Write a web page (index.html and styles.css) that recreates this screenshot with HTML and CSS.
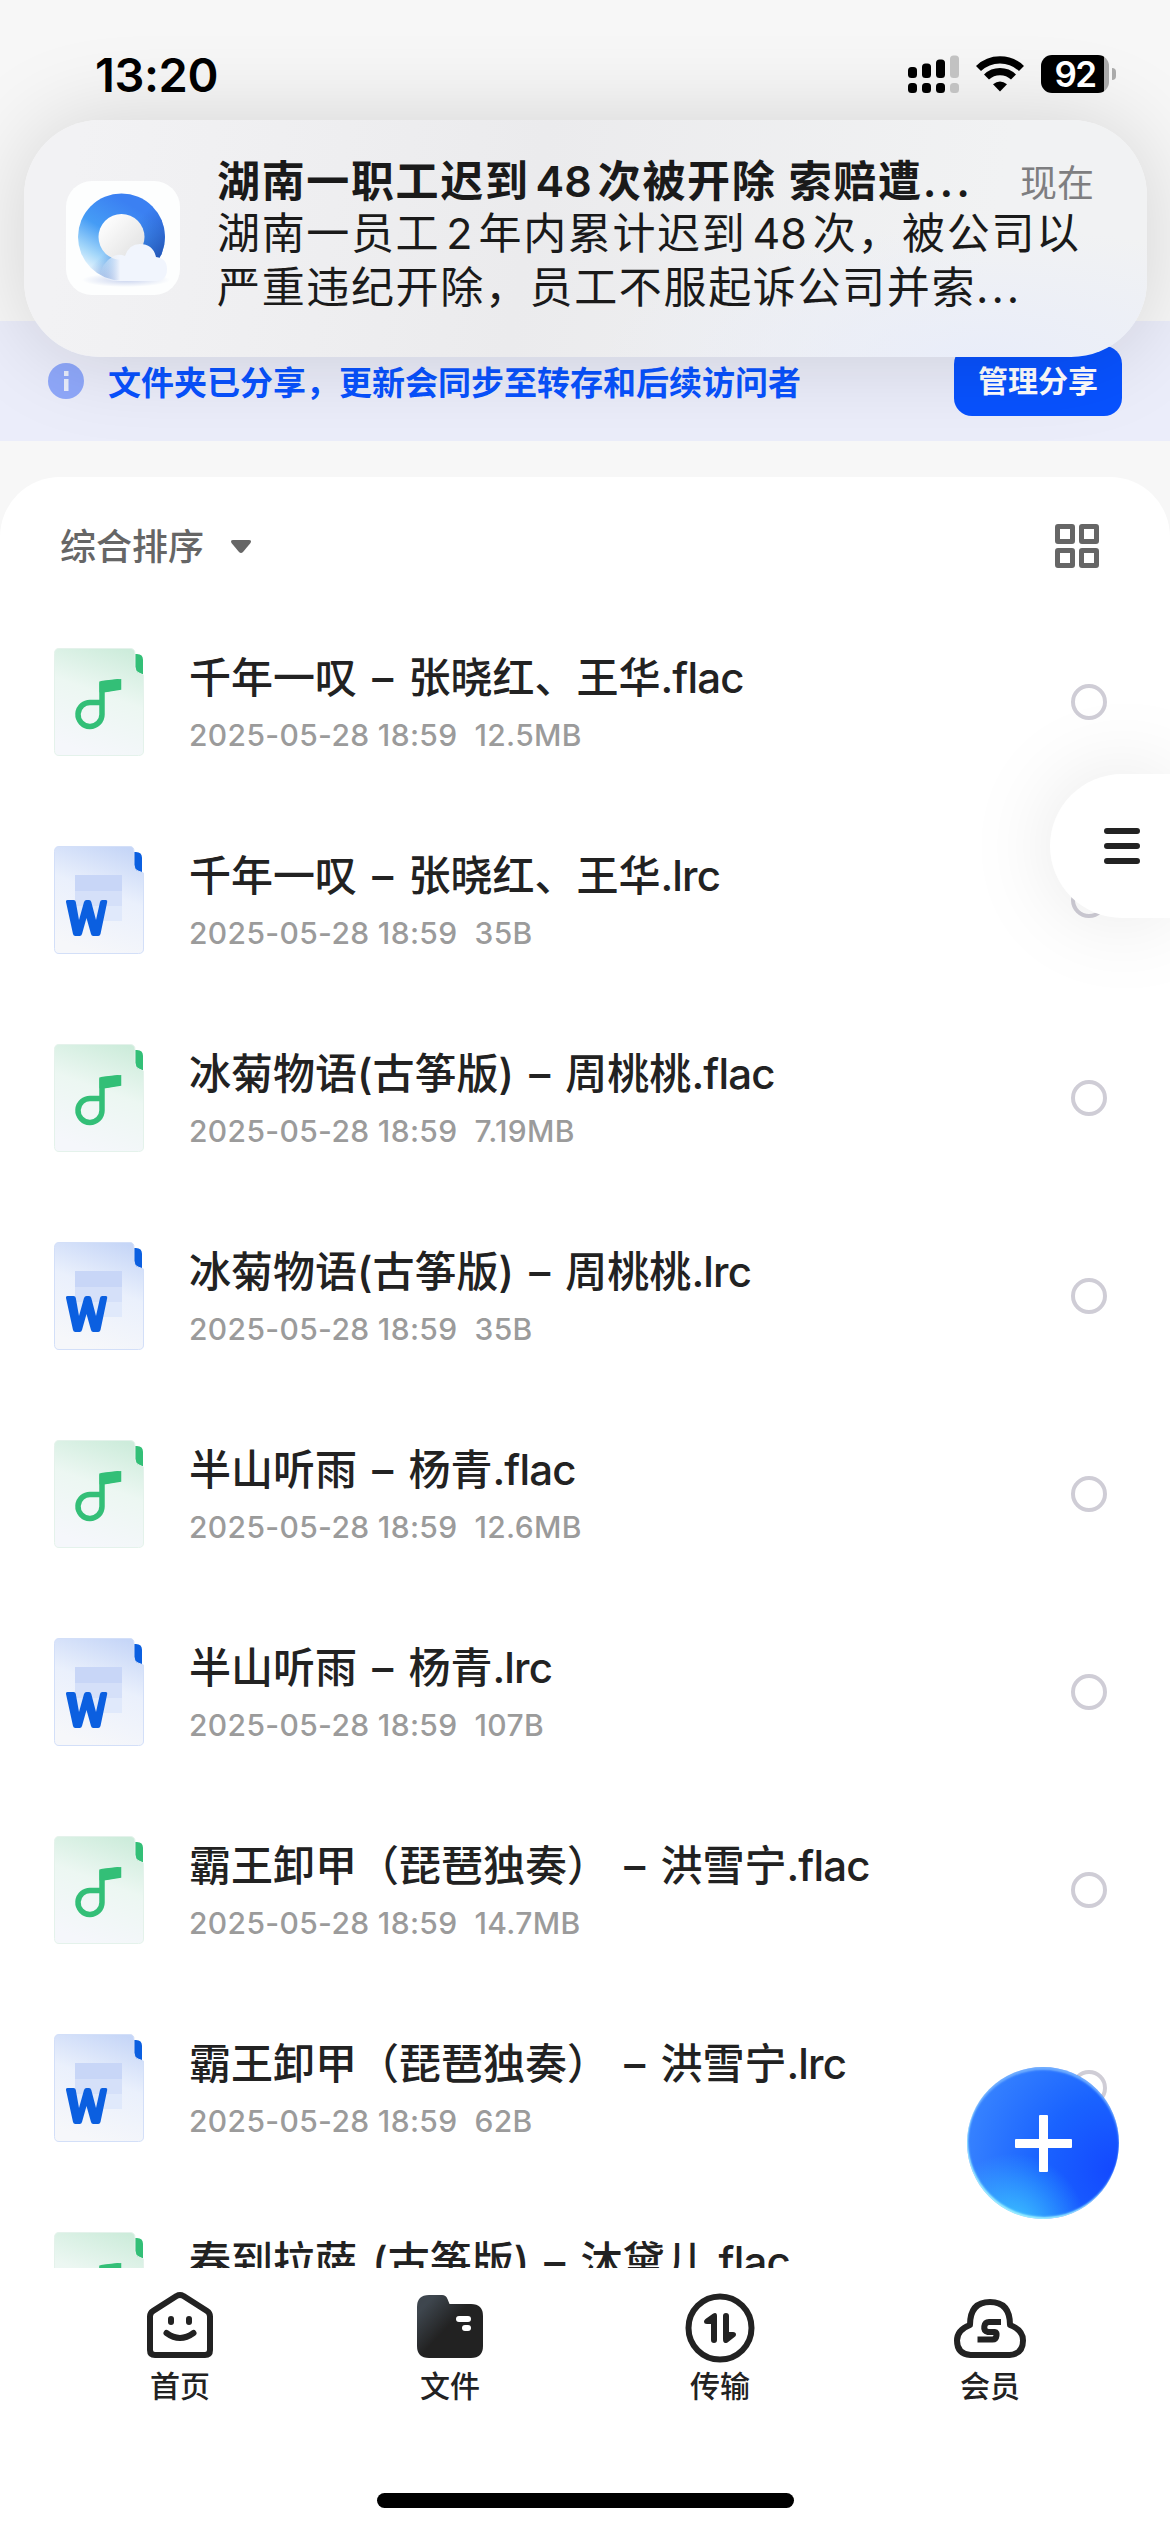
FILE: index.html
```html
<!DOCTYPE html>
<html lang="zh-CN">
<head>
<meta charset="utf-8">
<title>文件</title>
<link rel="stylesheet" href="styles.css">
</head>
<body>
<svg class="defs" width="0" height="0" aria-hidden="true">
  <defs>
    <linearGradient id="gGreen" x1="0.75" y1="0" x2="0.45" y2="1">
      <stop offset="0" stop-color="#cdecdb"/><stop offset="0.45" stop-color="#ecf7f2"/><stop offset="1" stop-color="#f5f7fb"/>
    </linearGradient>
    <linearGradient id="gBlue" x1="0.75" y1="0" x2="0.45" y2="1">
      <stop offset="0" stop-color="#c6d6f7"/><stop offset="0.45" stop-color="#eaf0fc"/><stop offset="1" stop-color="#f6f7fa"/>
    </linearGradient>
    <symbol id="music" viewBox="0 0 90 108">
      <path d="M81 6h2q6 0 6 6v15q-8-1-8-8z" fill="#33bf77"/>
      <path d="M5 .5h71q5 0 5 5V19q0 5 4 6l4.500 2V103q0 4.500-5 4.500H5q-4.500 0-4.500-5V5.500Q.5.500 5 .5z" fill="url(#gGreen)" stroke="#e4f2eb"/>
      <path d="M48 54.500H37a12 12 0 1 0 11 12V36l16.500-2v5.500L48 42" fill="none" stroke="#33bf77" stroke-width="5.500"/>
      <path d="M45.500 36q0-3 3-3.300l15-1.700q3.300-.2 3.300 3v4.500q0 2.500-2.500 3l-14 2.800H45.500z" fill="#33bf77"/>
    </symbol>
    <symbol id="word" viewBox="0 0 90 108">
      <path d="M80 6h2q6 0 6 6v15q-8-1-8-8z" fill="#0b5fe0"/>
      <path d="M5 .5h71q4 0 4 5V19q0 5 4 6l5.500 2V103q0 4.500-5 4.500H5q-4.500 0-4.500-5V5.500Q.5.500 5 .5z" fill="url(#gBlue)" stroke="#d3dff8"/>
      <path d="M21 29h47v16H21z" fill="#c8d6f7"/><path d="M21 45h47v15H21z" fill="#d5e0f9"/><path d="M21 60h47v15H21z" fill="#e0e9fb"/>
      <path d="M12 56q-.5-2 1.500-2h6q2 0 2.300 2L25 74l5-18q.7-2 2.500-2h2.500q1.800 0 2.300 2L42 74l4-18q.4-2 2.300-2h3.400q2 0 1.500 2L46.500 88q-.5 2-2.300 2h-5q-1.700 0-2.200-2L32.500 72 28 88q-.5 2-2.300 2h-4.400q-1.800 0-2.300-2z" fill="#0b5fe0"/>
    </symbol>
  </defs>
</svg>

<div class="screen">
  <header class="status">
    <span class="time">13:20</span>
    <div class="status-icons">
      <svg class="signal" width="52" height="38" viewBox="0 0 52 38">
        <g fill="#000"><rect x="0" y="12" width="9" height="11" rx="3.500"/><rect x="14" y="8.500" width="9" height="14.500" rx="3.500"/><rect x="28" y="4.500" width="9" height="18.500" rx="3.500"/><rect x="0" y="28" width="9" height="10" rx="3.500"/><rect x="14" y="28" width="9" height="10" rx="3.500"/><rect x="28" y="28" width="9" height="10" rx="3.500"/></g>
        <g fill="#c2c2c2"><rect x="42" y="0.500" width="9" height="22.500" rx="3.500"/><rect x="42" y="28" width="9" height="10" rx="3.500"/></g>
      </svg>
      <svg class="wifi" width="50" height="38" viewBox="0 0 50 38">
        <g fill="none" stroke="#000" stroke-width="7.200"><path d="M3.500 13.500a31 31 0 0 1 43 0"/><path d="M11.500 22a19.500 19.500 0 0 1 27 0"/></g>
        <path d="M25 36.500l-7-7.200q7-5.600 14 0z"/>
      </svg>
      <div class="battery"><span>92</span></div>
      <i class="nub"></i>
    </div>
  </header>

  <section class="notice">
    <svg class="app-icon" width="114" height="114" viewBox="0 0 114 114">
      <defs>
        <linearGradient id="ring" x1="0.8" y1="0.25" x2="0.35" y2="1"><stop offset="0" stop-color="#3b80f2"/><stop offset="0.45" stop-color="#459cf5"/><stop offset="0.8" stop-color="#a6d8fa"/><stop offset="1" stop-color="#e6f4fd"/></linearGradient>
        <linearGradient id="ringDark" x1="0.3" y1="0.2" x2="0.9" y2="0.8"><stop offset="0.4" stop-color="#2a61c8" stop-opacity="0"/><stop offset="1" stop-color="#2253b5"/></linearGradient>
        <linearGradient id="hole" x1="0" y1="0" x2="1" y2="1"><stop offset="0.1" stop-color="#fff"/><stop offset="1" stop-color="#dedede"/></linearGradient>
        <linearGradient id="cloud" x1="0" y1="0" x2="1" y2="0"><stop offset="0" stop-color="#f1f5fd" stop-opacity="0"/><stop offset="0.3" stop-color="#f1f5fd"/></linearGradient>
        <radialGradient id="cloudShade"><stop offset="0" stop-color="#c9d3ee"/><stop offset="1" stop-color="#c9d3ee" stop-opacity="0"/></radialGradient>
      </defs>
      <rect width="114" height="114" rx="26" fill="#fdfefe"/>
      <ellipse cx="60" cy="99" rx="44" ry="7" fill="url(#cloudShade)"/>
      <circle cx="55.500" cy="56" r="43.500" fill="url(#ring)"/>
      <circle cx="55.500" cy="56" r="43.500" fill="url(#ringDark)"/>
      <circle cx="55.500" cy="56" r="23" fill="url(#hole)"/>
      <path d="M34 94q2-12 12-18 6-4 13-1 4-12 15-12 13 0 16 13 11 1 11 12 0 12-11 12H52q-11 0-18-6z" fill="url(#cloud)"/>
    </svg>
    <div class="notice-text">
      <div class="notice-head"><b>湖南一职工迟到<i>48</i>次被开除&nbsp;索赔遭<em>...</em></b><time>现在</time></div>
      <p>湖南一员工<i>2</i>年内累计迟到<i>48</i>次，被公司以</p>
      <p>严重违纪开除，员工不服起诉公司并索<em>...</em></p>
    </div>
  </section>

  <section class="banner">
    <svg width="36" height="36" viewBox="0 0 36 36"><circle cx="18" cy="18" r="18" fill="#8fa8fa"/><path d="M16 8h4.500v5H16zM16 16h4.500v12H16z" fill="#e9edfb"/></svg>
    <span class="banner-text">文件夹已分享，更新会同步至转存和后续访问者</span>
    <button class="manage">管理分享</button>
  </section>

  <main class="card">
    <div class="toolbar">
      <span class="sort">综合排序</span>
      <svg class="caret" width="22" height="15" viewBox="0 0 22 15"><path d="M3 1h16q3 0 1.500 3l-7.500 9q-2 2-4 0L1.500 4Q0 1 3 1z" fill="#666"/></svg>
      <svg class="grid-icon" width="44" height="44" viewBox="0 0 44 44"><g fill="none" stroke="#666" stroke-width="5"><rect x="2.500" y="2.500" width="15" height="15" rx="0.500"/><rect x="26.500" y="2.500" width="15" height="15" rx="0.500"/><rect x="2.500" y="26.500" width="15" height="15" rx="0.500"/><rect x="26.500" y="26.500" width="15" height="15" rx="0.500"/></g></svg>
    </div>
    <ul class="list">
      <li><svg class="file"><use href="#music"/></svg><div class="info"><h3>千年一叹 – 张晓红、王华<i>.flac</i></h3><p>2025-05-28 18:59<span>12.5MB</span></p></div><i class="radio"></i></li>
      <li><svg class="file"><use href="#word"/></svg><div class="info"><h3>千年一叹 – 张晓红、王华<i>.lrc</i></h3><p>2025-05-28 18:59<span>35B</span></p></div><i class="radio"></i></li>
      <li><svg class="file"><use href="#music"/></svg><div class="info"><h3>冰菊物语(古筝版) – 周桃桃<i>.flac</i></h3><p>2025-05-28 18:59<span>7.19MB</span></p></div><i class="radio"></i></li>
      <li><svg class="file"><use href="#word"/></svg><div class="info"><h3>冰菊物语(古筝版) – 周桃桃<i>.lrc</i></h3><p>2025-05-28 18:59<span>35B</span></p></div><i class="radio"></i></li>
      <li><svg class="file"><use href="#music"/></svg><div class="info"><h3>半山听雨 – 杨青<i>.flac</i></h3><p>2025-05-28 18:59<span>12.6MB</span></p></div><i class="radio"></i></li>
      <li><svg class="file"><use href="#word"/></svg><div class="info"><h3>半山听雨 – 杨青<i>.lrc</i></h3><p>2025-05-28 18:59<span>107B</span></p></div><i class="radio"></i></li>
      <li><svg class="file"><use href="#music"/></svg><div class="info"><h3>霸王卸甲（琵琶独奏） – 洪雪宁<i>.flac</i></h3><p>2025-05-28 18:59<span>14.7MB</span></p></div><i class="radio"></i></li>
      <li><svg class="file"><use href="#word"/></svg><div class="info"><h3>霸王卸甲（琵琶独奏） – 洪雪宁<i>.lrc</i></h3><p>2025-05-28 18:59<span>62B</span></p></div><i class="radio"></i></li>
      <li><svg class="file"><use href="#music"/></svg><div class="info"><h3>春到拉萨 (古筝版) – 沐黛儿<i>.flac</i></h3></div></li>
    </ul>
  </main>

  <nav class="tabs">
    <a><svg width="72" height="72" viewBox="0 0 72 72"><g fill="none" stroke="#222" stroke-width="6" stroke-linejoin="round" stroke-linecap="round"><path d="M32.500 5q3.500-2 7 0L63 20q3 2 3 5.500V59q0 5-5 5H11q-5 0-5-5V25.500q0-3.500 3-5.500z"/><path d="M22.500 42q13.500 10 27 0"/></g><rect x="24" y="25" width="6" height="9" rx="3" fill="#222"/><rect x="42" y="25" width="6" height="9" rx="3" fill="#222"/></svg><span>首页</span></a>
    <a><svg width="72" height="72" viewBox="0 0 72 72"><defs><linearGradient id="fold" x1="0.1" y1="0.1" x2="0.55" y2="0.5"><stop offset="0.1" stop-color="#3e464e"/><stop offset="0.9" stop-color="#222"/></linearGradient></defs><path d="M15 4h13q4 0 5.500 4l2 5H57q12 0 12 12v30q0 12-12 12H15Q3 67 3 55V16Q3 4 15 4z" fill="url(#fold)"/><rect x="42" y="25" width="15" height="6" rx="3" fill="#fff"/><rect x="48" y="34" width="9" height="6" rx="3" fill="#fff"/></svg><span>文件</span></a>
    <a><svg width="72" height="72" viewBox="0 0 72 72"><circle cx="36" cy="37" r="31.500" fill="none" stroke="#222" stroke-width="6"/><path d="M33 25v24q0 3-3 3t-3-3V33h-4q-3 0-3-2.500 0-1.500 1.500-2.500l7-5q4.500-2.500 4.500 2zM39 48V25q0-3 3-3t3 3v16h4q3 0 3 2.500 0 1.500-1.500 2.500l-7 5.500Q39 53.500 39 48z" fill="#222"/></svg><span>传输</span></a>
    <a><svg width="72" height="72" viewBox="0 0 72 72"><path d="M16.500 64h39q13.500-1 13.500-14.500 0-10.500-13-15.500 0-23-20-23t-20 23q-13 5-13 15.500Q3 63 16.500 64z" fill="none" stroke="#222" stroke-width="6" stroke-linejoin="round"/><path d="M47 31H35q-4 0-4.700 4.500T34 41h7q2 0 1.500 3.500-.5 4-4 4H23.500" fill="none" stroke="#222" stroke-width="6"/></svg><span>会员</span></a>
  </nav>
  <div class="home"></div>

  <div class="side-menu"><svg width="36" height="36" viewBox="0 0 36 36"><path d="M3 3h30M3 18h30M3 33h30" stroke="#222" stroke-width="6" stroke-linecap="round"/></svg></div>
  <div class="fab"><svg width="57" height="57" viewBox="0 0 57 57"><path d="M24 1q0-1 1-1h7q1 0 1 1v23h23q1 0 1 1v7q0 1-1 1H33v23q0 1-1 1h-7q-1 0-1-1V33H1q-1 0-1-1v-7q0-1 1-1h23z" fill="#fff"/></svg></div>
</div>
</body>
</html>
```
FILE: styles.css
```css
* { box-sizing: border-box; margin: 0; padding: 0; }
body { background: #f7f7f7; font-family: Inter, "Noto Sans CJK SC", sans-serif; color: #222; }
i, em { font-style: normal; }
.defs { position: absolute; }
.screen { position: relative; width: 1170px; height: 2532px; overflow: hidden; display: flex; flex-direction: column; background: #f7f7f7; }

.status { height: 321px; flex: none; padding: 46px 54px 0 95px; display: flex; justify-content: space-between; align-items: flex-start; color: #000; }
.time, .status-icons { position: relative; z-index: 3; }
.time { font-size: 47px; font-weight: 600; line-height: 57px; letter-spacing: -0.4px; }
.status-icons { display: flex; align-items: center; padding-top: 9px; }
.signal { margin-right: 15px; }
.wifi { margin-right: 16px; }
.battery { width: 68px; height: 38px; border-radius: 11px; background: linear-gradient(90deg, #000 63px, #aaa 63px); color: #fff; text-align: center; font-size: 35px; font-weight: 600; line-height: 38px; }
.battery span { display: block; letter-spacing: -1.5px; }
.nub { width: 4px; height: 12px; margin-left: 3px; background: #aaa; border-radius: 0 4px 4px 0; }

.notice { position: absolute; z-index: 2; left: 24px; top: 120px; width: 1123px; height: 237px; border-radius: 76px; padding: 0 42px; display: flex; align-items: flex-start; background: radial-gradient(ellipse 380px 130px at 85% 100%, #e9edf9, rgba(233,237,249,0)), linear-gradient(100deg, #f2f2f4 5%, #ebebed 45%, #f1f2f3 85%); box-shadow: 0 0 90px rgba(0,0,0,.15); }
.app-icon { margin-top: 61px; flex: none; }
.notice-text { margin: 34px 0 0 37px; flex: 1; font-size: 43px; line-height: 54px; color: #1a1a1a; white-space: nowrap; letter-spacing: 1.65px; }
.notice-head { height: 52px; display: flex; justify-content: space-between; }
.notice-head b { font-weight: 600; }
.notice-head time { font-size: 37px; letter-spacing: 0; color: #7e7e80; padding: 3px 11px 0 0; }
.notice p { font-weight: 400; }
.notice i { margin: 0 6px 0 6px; letter-spacing: 0; }
.notice em { letter-spacing: 3px; }

.banner { height: 120px; flex: none; background: #ebedfa; display: flex; align-items: center; padding: 0 48px; }
.banner-text { margin-left: 24px; font-size: 33px; font-weight: 600; color: #0852ff; white-space: nowrap; }
.manage { margin-left: auto; width: 168px; height: 70px; border: 0; border-radius: 18px; background: #0852ff; color: #fff; font: 700 30px/70px Inter, "Noto Sans CJK SC", sans-serif; }

.card { flex: none; margin-top: 36px; height: 1791px; background: #fff; border-radius: 60px 60px 0 0; overflow: hidden; }
.toolbar { height: 138px; display: flex; align-items: center; padding: 0 71px 0 60px; }
.sort { font-size: 36px; font-weight: 500; color: #666; padding-bottom: 4px; }
.caret { margin-left: 26px; }
.grid-icon { margin-left: auto; }
.list { list-style: none; }
.list li { height: 198px; display: flex; padding: 33px 63px 0 54px; }
.file { width: 90px; height: 108px; flex: none; }
.info { margin-left: 45px; flex: 1; white-space: nowrap; }
.info h3 { font-weight: 500; font-size: 42px; line-height: 60px; word-spacing: 4px; }
.info h3 i { letter-spacing: -0.8px; }
.info p { margin-top: 7px; font-size: 30px; font-weight: 500; line-height: 40px; color: #9b9b9b; letter-spacing: 0.35px; }
.info p span { margin-left: 17px; }
.radio { width: 36px; height: 36px; margin-top: 36px; border: 4px solid #cfcdd6; border-radius: 50%; }

.tabs { flex: none; height: 225px; background: #fff; padding: 23px 45px 0; display: grid; grid-template-columns: repeat(4, 1fr); }
.tabs a { display: flex; flex-direction: column; align-items: center; font-size: 30px; line-height: 36px; font-weight: 500; gap: 5px; }
.home { flex: 1; background: #fff; }
.home::before { content: ""; display: block; width: 417px; height: 15px; margin: 0 auto; border-radius: 8px; background: #000; }

.side-menu { position: absolute; left: 1050px; top: 774px; width: 120px; height: 144px; border-radius: 72px 0 0 72px; background: #fff; box-shadow: 0 0 90px rgba(0,0,0,.1); padding: 54px 0 0 54px; }
.fab { position: absolute; left: 967px; top: 2067px; width: 152px; height: 152px; border-radius: 50%; display: flex; align-items: center; justify-content: center; background: radial-gradient(circle at 30% 105%, #3bc4ff 0, rgba(59,196,255,0) 38%), radial-gradient(circle at 98% 68%, #1348ff 0, #1a63ff 42%, #3a86ff 90%); box-shadow: inset 1px -2px 2px #9df0ff, inset 0 3px 2px #6fadff; }
```
